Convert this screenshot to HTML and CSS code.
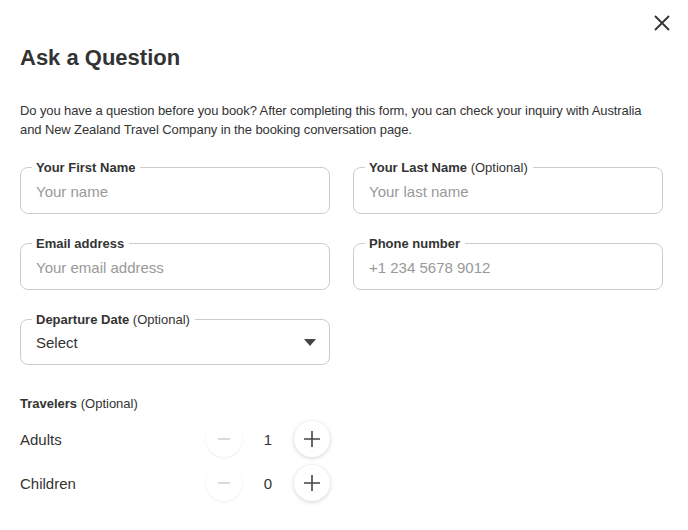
FILE: index.html
```html
<!DOCTYPE html>
<html>
<head>
  <title>Ask a Question</title>
  <link rel="stylesheet" href="styles.css">
</head>
<body>

<div class="modal">
  <div class="top">
    <button class="close" aria-label="Close">
      <svg width="16" height="16" viewBox="0 0 16 16"><path d="M1 1L15 15M15 1L1 15" stroke="#333" stroke-width="1.8" fill="none"/></svg>
    </button>
  </div>

  <h2>Ask a Question</h2>

  <p class="intro">Do you have a question before you book? After completing this form, you can check your inquiry with Australia and New Zealand Travel Company in the booking conversation page.</p>

  <div class="fields">
    <fieldset>
      <legend><b>Your First Name</b></legend>
      <input type="text" placeholder="Your name">
    </fieldset>
    <fieldset>
      <legend><b>Your Last Name</b> (Optional)</legend>
      <input type="text" placeholder="Your last name">
    </fieldset>
    <fieldset>
      <legend><b>Email address</b></legend>
      <input type="text" placeholder="Your email address">
    </fieldset>
    <fieldset>
      <legend><b>Phone number</b></legend>
      <input type="text" placeholder="+1 234 5678 9012">
    </fieldset>
    <fieldset class="select">
      <legend><b>Departure Date</b> (Optional)</legend>
      <div class="select-value">
        <span>Select</span>
        <svg width="12" height="7" viewBox="0 0 12 7"><path d="M0 0H12L6 7Z" fill="#444"/></svg>
      </div>
    </fieldset>
  </div>

  <div class="travelers">
    <div class="travelers-title"><b>Travelers</b> (Optional)</div>

    <div class="row">
      <span>Adults</span>
      <div class="stepper">
        <button class="step off">
          <svg width="14" height="14" viewBox="0 0 14 14"><path d="M1 7H13" stroke="#ccc" stroke-width="1.4"/></svg>
        </button>
        <span class="count">1</span>
        <button class="step">
          <svg width="16" height="16" viewBox="0 0 16 16"><path d="M0 8H16M8 0V16" stroke="#444" stroke-width="1.6"/></svg>
        </button>
      </div>
    </div>

    <div class="row">
      <span>Children</span>
      <div class="stepper">
        <button class="step off">
          <svg width="14" height="14" viewBox="0 0 14 14"><path d="M1 7H13" stroke="#ccc" stroke-width="1.4"/></svg>
        </button>
        <span class="count">0</span>
        <button class="step">
          <svg width="16" height="16" viewBox="0 0 16 16"><path d="M0 8H16M8 0V16" stroke="#444" stroke-width="1.6"/></svg>
        </button>
      </div>
    </div>
  </div>
</div>

</body>
</html>
```

FILE: styles.css
```css
body {
  margin: 0;
  background-color: white;
  color: #333;
  font-family: "Liberation Sans", Arial, Helvetica, sans-serif;
}

button,
input {
  font-family: "Liberation Sans", Arial, Helvetica, sans-serif;
}

.modal {
  padding: 0 25px 0 20px;
}

.top {
  display: flex;
  justify-content: flex-end;
  padding-top: 15px;
  margin-right: -7px;
}

.close {
  border: none;
  background: none;
  padding: 0;
  width: 16px;
  height: 16px;
  cursor: pointer;
  display: block;
}

.close svg {
  display: block;
}

h2 {
  font-size: 22px;
  line-height: 26px;
  margin: 14px 0 0 0;
  color: #333;
}

.intro {
  font-size: 13px;
  letter-spacing: -0.1px;
  line-height: 19px;
  margin: 30px 0 0 0;
}

.fields {
  display: grid;
  grid-template-columns: 310px 310px;
  column-gap: 23px;
  row-gap: 22px;
  margin-top: 21px;
}

fieldset {
  margin: 0;
  padding: 0 13px 6px 15px;
  border: 1px solid #ccc;
  border-radius: 8px;
  min-width: 0;
}

legend {
  font-size: 13px;
  line-height: 15px;
  padding: 0 5px 0 4px;
  margin-left: -4px;
  color: #333;
}

fieldset input {
  display: block;
  width: 100%;
  height: 32px;
  border: none;
  padding: 0;
  font-size: 15px;
  color: #333;
  outline: none;
  background: none;
}

fieldset input::placeholder {
  color: #999;
}

.select-value {
  display: flex;
  justify-content: space-between;
  align-items: center;
  height: 31px;
  font-size: 15px;
}

.select-value svg {
  display: block;
}

.travelers {
  width: 310px;
  margin-top: 31px;
}

.travelers-title {
  font-size: 13px;
  line-height: 16px;
  margin-bottom: 9px;
}

.row {
  display: flex;
  justify-content: space-between;
  align-items: center;
  height: 36px;
  margin-bottom: 8px;
  font-size: 15px;
}

.stepper {
  display: flex;
  align-items: center;
}

.step {
  width: 36px;
  height: 36px;
  border-radius: 50%;
  border: none;
  background: white;
  box-shadow: 0 1px 4px rgba(0, 0, 0, 0.18);
  padding: 0;
  display: flex;
  justify-content: center;
  align-items: center;
  cursor: pointer;
}

.step.off {
  box-shadow: 0 1px 3px rgba(0, 0, 0, 0.07);
  cursor: default;
}

.count {
  width: 52px;
  text-align: center;
  font-size: 15px;
}
```
